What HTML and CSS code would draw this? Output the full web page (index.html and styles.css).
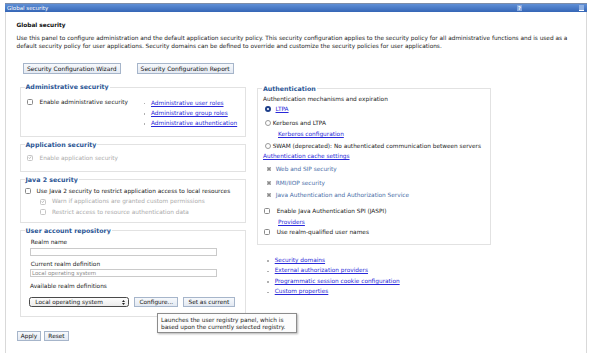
FILE: index.html
```html
<!DOCTYPE html>
<html>
<head>
<meta charset="utf-8">
<title>Global security</title>
<link rel="stylesheet" href="styles.css">
</head>
<body>
<div class="window">
  <div class="titlebar">
    <span class="title">Global security</span>
    <span class="tb-help">?</span>
    <span class="tb-min"></span>
  </div>
  <div class="content">
    <h1 class="heading">Global security</h1>
    <p class="desc">Use this panel to configure administration and the default application security policy. This security configuration applies to the security policy for all administrative functions and is used as a<br>default security policy for user applications. Security domains can be defined to override and customize the security policies for user applications.</p>
    <div class="toolbar">
      <button class="btn">Security Configuration Wizard</button>
      <button class="btn">Security Configuration Report</button>
    </div>

    <div class="columns">
      <div class="col-left">
        <fieldset class="box">
          <legend>Administrative security</legend>
          <div class="admin-row">
            <label class="check admin-check"><span class="cb"></span>Enable administrative security</label>
            <ul class="bullets admin-links">
              <li><a href="#">Administrative user roles</a></li>
              <li><a href="#">Administrative group roles</a></li>
              <li><a href="#">Administrative authentication</a></li>
            </ul>
          </div>
        </fieldset>

        <fieldset class="box">
          <legend>Application security</legend>
          <div class="app-row">
            <label class="check app-check disabled"><span class="cb cb-dis"><svg viewBox="0 0 6 6" width="5" height="5"><path d="M1 3.1 L2.4 4.5 L4.9 1.3" stroke="#9a9a9a" stroke-width="1" fill="none"/></svg></span>Enable application security</label>
          </div>
        </fieldset>

        <fieldset class="box">
          <legend>Java 2 security</legend>
          <div class="java-rows">
            <label class="check java-main"><span class="cb"></span>Use Java 2 security to restrict application access to local resources</label>
            <label class="check java-sub disabled"><span class="cb cb-dis"><svg viewBox="0 0 6 6" width="5" height="5"><path d="M1 3.1 L2.4 4.5 L4.9 1.3" stroke="#9a9a9a" stroke-width="1" fill="none"/></svg></span>Warn if applications are granted custom permissions</label>
            <label class="check java-sub disabled"><span class="cb cb-dis"></span>Restrict access to resource authentication data</label>
          </div>
        </fieldset>

        <fieldset class="box">
          <legend>User account repository</legend>
          <div class="repo">
            <div class="repo-label first">Realm name</div>
            <div class="field"></div>
            <div class="repo-label second">Current realm definition</div>
            <div class="field field-ro">Local operating system</div>
            <div class="repo-label third">Available realm definitions</div>
            <div class="repo-actions">
              <div class="select"><span>Local operating system</span><svg width="3" height="5" viewBox="0 0 3 5"><path d="M1.5 0 L3 2 H0 Z M0 3 H3 L1.5 5 Z" fill="#222"/></svg></div>
              <button class="btn btn-sm btn-configure">Configure...</button>
              <button class="btn btn-sm btn-current">Set as current</button>
            </div>
          </div>
        </fieldset>
      </div>

      <div class="col-right">
        <fieldset class="box auth">
          <legend>Authentication</legend>
          <div class="auth-row r-mech">Authentication mechanisms and expiration</div>
          <div class="auth-row r-ltpa"><span class="radio-on"><svg viewBox="0 0 6 6" width="6" height="6"><circle cx="3" cy="3" r="3" fill="#1d3e8a"/><circle cx="3" cy="3" r="1.1" fill="#fff"/></svg></span><a href="#">LTPA</a></div>
          <div class="auth-row r-kerb"><span class="radio"></span>Kerberos and LTPA</div>
          <div class="auth-row r-kcfg"><a href="#">Kerberos configuration</a></div>
          <div class="auth-row r-swam"><span class="radio"></span>SWAM (deprecated): No authenticated communication between servers</div>
          <div class="auth-row r-cache"><a href="#">Authentication cache settings</a></div>
          <div class="auth-row expand r-web"><svg class="plus" width="4" height="4" viewBox="0 0 4 4"><rect x="0.3" y="0.3" width="3.4" height="3.4" fill="#e6e6e6" stroke="#999" stroke-width="0.6"/><path d="M1 2 H3 M2 1 V3" stroke="#333" stroke-width="0.6"/></svg><span>Web and SIP security</span></div>
          <div class="auth-row expand r-rmi"><svg class="plus" width="4" height="4" viewBox="0 0 4 4"><rect x="0.3" y="0.3" width="3.4" height="3.4" fill="#e6e6e6" stroke="#999" stroke-width="0.6"/><path d="M1 2 H3 M2 1 V3" stroke="#333" stroke-width="0.6"/></svg><span>RMI/IIOP security</span></div>
          <div class="auth-row expand r-jaas"><svg class="plus" width="4" height="4" viewBox="0 0 4 4"><rect x="0.3" y="0.3" width="3.4" height="3.4" fill="#e6e6e6" stroke="#999" stroke-width="0.6"/><path d="M1 2 H3 M2 1 V3" stroke="#333" stroke-width="0.6"/></svg><span>Java Authentication and Authorization Service</span></div>
          <div class="auth-row r-jaspi"><span class="cb"></span>Enable Java Authentication SPI (JASPI)</div>
          <div class="auth-row r-prov"><a href="#">Providers</a></div>
          <div class="auth-row r-realm"><span class="cb"></span>Use realm-qualified user names</div>
        </fieldset>

        <ul class="bullets more-links">
          <li><a href="#">Security domains</a></li>
          <li><a href="#">External authorization providers</a></li>
          <li><a href="#">Programmatic session cookie configuration</a></li>
          <li><a href="#">Custom properties</a></li>
        </ul>
      </div>
    </div>

    <div class="actions">
      <button class="btn btn-sm btn-apply">Apply</button>
      <button class="btn btn-sm btn-reset">Reset</button>
    </div>
  </div>
</div>
<div class="tooltip">Launches the user registry panel, which is<br>based upon the currently selected registry.</div>
</body>
</html>
```

FILE: styles.css
```css
* { box-sizing: border-box; }
html, body { margin: 0; padding: 0; background: #fff; }
body {
  font-family: "DejaVu Sans", Verdana, sans-serif;
  font-size: 5.8px;
  color: #222;
  padding-top: 3px;
}
a { color: #2828d8; text-decoration: underline; }

.window { margin-left: 5px; width: 582px; }

.titlebar {
  height: 9px;
  display: flex;
  align-items: center;
  background: linear-gradient(#5f8fd6, #3566b6);
  border-top: 1px solid #7d8da8;
  color: #fff;
  font-size: 5.5px;
  padding-left: 2px;
}
.title { flex: 1; }
.tb-help {
  width: 5px; height: 6px;
  background: #86a8de;
  color: #fff;
  font-size: 5px; line-height: 6px;
  text-align: center;
  font-weight: bold;
  margin-right: 57px;
}
.tb-min {
  width: 5px; height: 6px;
  background: #8fb0e2;
  border-bottom: 1px solid #fff;
  margin-right: 3px;
}

.content {
  height: 341px;
  border-left: 1px solid #d9d9d9;
  border-right: 1px solid #d9d9d9;
  padding: 9px 0 0 10.5px;
}

.heading {
  margin: 0;
  font-size: 5.8px;
  font-weight: bold;
  line-height: 8px;
  color: #111;
}
.desc { margin: 5px 0 0; line-height: 8px; white-space: nowrap; }

.toolbar { display: flex; gap: 16px; margin: 13px 0 0 6.5px; }

.btn {
  font-family: inherit;
  font-size: 6px;
  height: 11px;
  line-height: 9px;
  padding: 0 3px;
  margin: 0;
  border: 1px solid #a6b5ca;
  border-radius: 0;
  background: linear-gradient(#f7f9fc, #e3e9f2);
  color: #111;
}
.btn-sm { height: 10px; line-height: 8px; font-size: 5.8px; padding: 0 3.2px; }

.columns { display: flex; align-items: flex-start; gap: 11px; margin: 9px 0 0 3px; }
.col-left { width: 226.5px; display: flex; flex-direction: column; gap: 4px; }
.col-right { width: 234px; margin-top: 1.5px; }

.box { margin: 0; padding: 0 4px; border: 1px solid #e2e2e2; min-width: 0; }
.box legend {
  padding: 0 1px;
  font-size: 6.3px;
  font-weight: bold;
  line-height: 8px;
  color: #2a5594;
}

.check { display: flex; align-items: center; line-height: 8px; }
.cb {
  flex: none;
  width: 6px; height: 6px;
  border: 1px solid #8a8a8a;
  border-radius: 1.5px;
  background: #fff;
  display: inline-flex;
  align-items: center;
  justify-content: center;
}
.cb-dis { border-color: #c6c6c6; }
.disabled { color: #ababab; }

.bullets { list-style: none; margin: 0; }
.bullets li { position: relative; }
.bullets li::before {
  content: "";
  position: absolute;
  left: -7px;
  top: 50%;
  width: 1.5px; height: 1.5px;
  background: #b0b0b0;
}

.admin-row { display: flex; align-items: flex-start; padding: 6.7px 0 7.4px; }
.admin-check { width: 116.7px; margin-left: 2.8px; }
.admin-check .cb { margin-right: 6.2px; }
.admin-links { padding: 0 0 0 7px; }
.admin-links li { line-height: 10.3px; }

.app-row { padding: 4.7px 0 9.3px; }
.app-check { margin-left: 2.2px; }
.app-check .cb { margin-right: 6.8px; }

.java-rows { padding: 2px 0 4.5px; }
.java-rows .check { line-height: 10.5px; }
.java-main .cb { margin-right: 6px; }
.java-sub { margin-left: 15px; }
.java-sub .cb { margin-right: 6.4px; }

.repo { padding: 4.2px 0 8.7px; }
.repo-label { line-height: 7px; margin-left: 6.2px; }
.repo-label.second { margin-top: 5.1px; }
.repo-label.third { margin-top: 6.8px; margin-left: 5.5px; }
.field {
  margin: 1.5px 0 0 5.5px;
  width: 186.7px;
  height: 8px;
  border: 1px solid #cacaca;
  background: #fff;
  font-size: 5.5px;
  line-height: 6px;
  padding-left: 1px;
  color: #8a8a8a;
}
.field-ro { margin-top: 0.9px; }
.repo-actions { display: flex; align-items: center; margin: 6.8px 0 0 4.8px; }
.select {
  width: 99.7px;
  height: 10px;
  display: flex;
  align-items: center;
  justify-content: space-between;
  border: 1px solid #4a4a4a;
  border-radius: 2.5px;
  background: linear-gradient(#fdfdfd, #ececec);
  padding: 0 3px 0 5px;
  line-height: 8px;
}
.btn-configure { margin-left: 5.3px; width: 44px; padding: 0; }
.btn-current { margin-left: 4.4px; width: 52.3px; padding: 0; }

.auth { padding-bottom: 7.7px; }
.auth-row { display: flex; align-items: center; line-height: 8px; }
.r-mech { margin: 2.8px 0 0 1px; }
.r-ltpa { margin: 2px 0 0 2.5px; }
.radio-on { display: inline-flex; width: 6px; height: 6px; margin-right: 5px; }
.radio {
  flex: none;
  width: 6px; height: 6px;
  border: 1px solid #9a9a9a;
  border-radius: 50%;
  background: #fff;
  margin-right: 1.7px;
}
.r-kerb { margin: 6px 0 0 3px; }
.r-kcfg { margin: 3px 0 0 16px; }
.r-swam { margin: 3.4px 0 0 3px; }
.r-cache { margin: 2.3px 0 0 1px; }
.expand { color: #4a6fa8; margin-left: 4.7px; }
.expand .plus { flex: none; margin-right: 5px; }
.r-web { margin-top: 4.7px; }
.r-rmi { margin-top: 6px; }
.r-jaas { margin-top: 4.6px; }
.r-jaspi { margin: 7.4px 0 0 2px; }
.r-jaspi .cb, .r-realm .cb { margin-right: 6.7px; }
.r-prov { margin: 3px 0 0 16px; }
.r-realm { margin: 2.6px 0 0 2px; }

.more-links { margin: 10px 0 0; padding-left: 17.7px; }
.more-links li { line-height: 10.5px; }
.more-links li::before { left: -7.4px; }

.actions { display: flex; gap: 2.4px; margin: 14px 0 0 0.2px; }
.btn-apply { width: 24.6px; padding: 0; }
.btn-reset { width: 25.6px; padding: 0; }

.tooltip {
  position: absolute;
  left: 157px;
  top: 313px;
  width: 140px;
  height: 20px;
  background: #fcfcfc;
  border: 1px solid #8c8c8c;
  box-shadow: 1px 1px 2px rgba(0, 0, 0, 0.3);
  padding: 2.5px 0 0 3px;
  line-height: 7.3px;
  color: #222;
}
```
